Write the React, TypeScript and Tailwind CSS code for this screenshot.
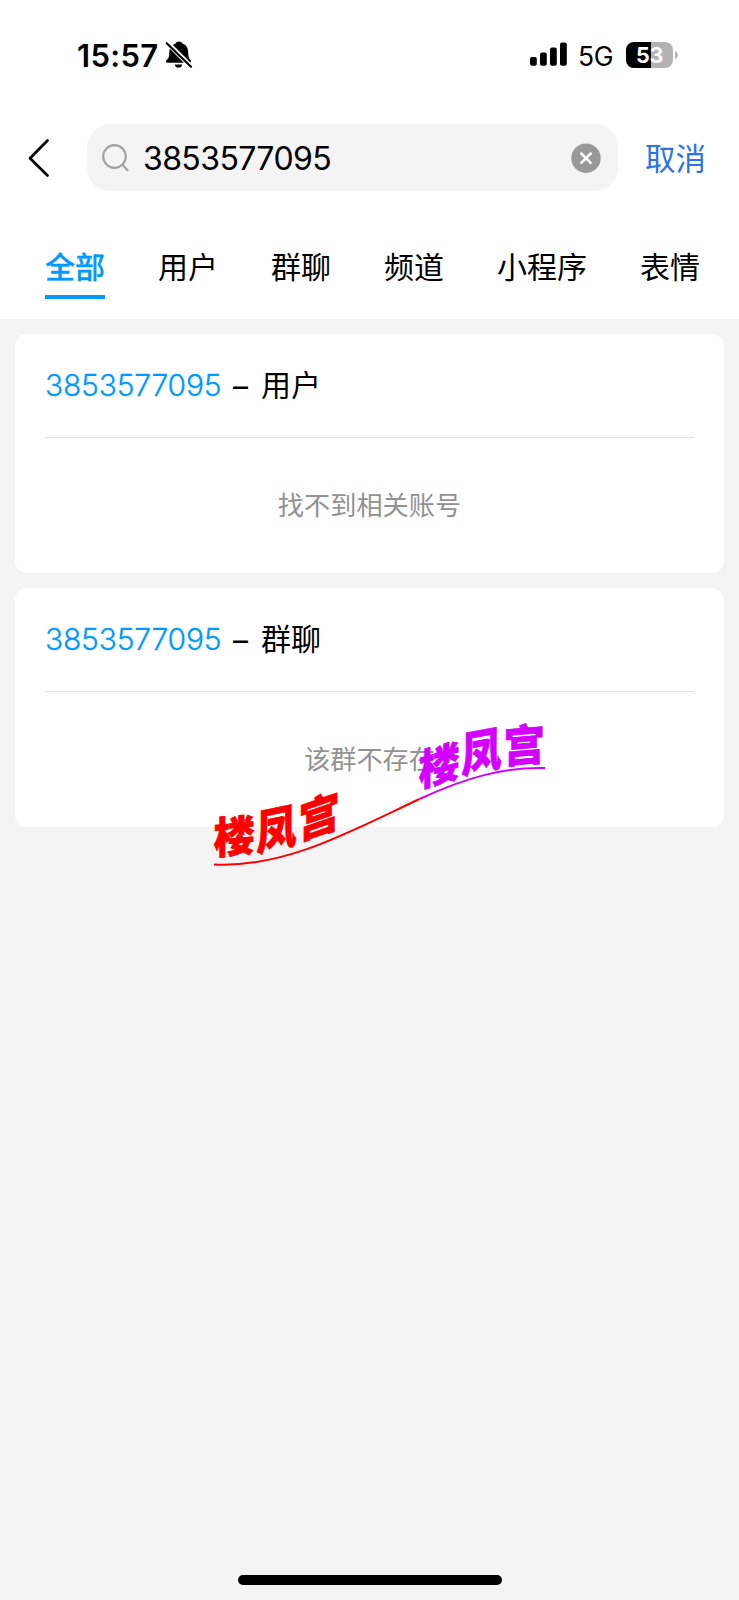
import type { ReactNode } from 'react';

const tabs = ['全部', '用户', '群聊', '频道', '小程序', '表情'];

function StatusBar() {
  return (
    <div className="flex h-[110px] items-center pl-[77px] pr-[60px]">
      <span className="w-[82px] whitespace-nowrap pt-[1px] text-[31px] leading-[40px] font-semibold tracking-[0.3px]">15:57</span>
      <svg className="ml-[6px]" width="28" height="28" viewBox="0 0 28 28">
        <path d="M14 .5C16 .5 17.1 1.6 17.6 2.8C21.8 4.1 23.1 7.5 23.2 11.7C23.3 16 24 17.5 25.6 19.2C26.4 20.2 26 21.8 24.5 21.8H2.5C.9 21.8 .6 20.2 1.5 19.2C3.9 17 4.2 15.4 4.3 11.7C4.4 7.3 6.5 4.1 10.4 2.8C10.9 1.6 12 .5 14 .5Z" />
        <path d="M9.7 23.4H17.3C16.8 25.5 15.5 26.6 13.5 26.6C11.5 26.6 10.2 25.5 9.7 23.4Z" />
        <path d="M2 1.5L26 25.5" stroke="white" strokeWidth="4.8" />
        <path d="M1.7 2.2L26 25.8" stroke="black" strokeWidth="2.2" strokeLinecap="round" />
      </svg>
      <svg className="ml-auto" width="38" height="26" viewBox="0 0 38 26">
        <rect x="0" y="15" width="6.8" height="8.8" rx="2" />
        <rect x="10" y="10.5" width="6.8" height="13.3" rx="2" />
        <rect x="20" y="5.5" width="6.8" height="18.3" rx="2" />
        <rect x="30" y="0.5" width="6.8" height="23.3" rx="2" />
      </svg>
      <span className="ml-[10px] w-[38px] whitespace-nowrap pt-[2px] text-[26.5px] leading-[40px] tracking-[-0.3px]">5G</span>
      <svg className="ml-[10px]" width="53" height="26" viewBox="0 0 53 26">
        <defs>
          <clipPath id="battery"><rect width="47" height="26" rx="8" /></clipPath>
        </defs>
        <g clipPath="url(#battery)">
          <rect width="47" height="26" fill="#b3b3b3" />
          <rect width="25" height="26" />
        </g>
        <path d="M49 9C52.7 10.2 52.7 15.8 49 17Z" fill="#b3b3b3" />
        <text x="23.7" y="20.8" textAnchor="middle" fontSize="21.5" fontWeight="700" fill="white">53</text>
      </svg>
    </div>
  );
}

function SearchHeader() {
  return (
    <div className="flex h-[95px] items-center">
      <svg className="ml-[28px]" width="22" height="40" viewBox="0 0 22 40" fill="none" stroke="black" strokeWidth="2.7" strokeLinecap="round" strokeLinejoin="round">
        <path d="M19.5 2.5L2 20.3L19.5 37.5" />
      </svg>
      <div className="ml-[37px] flex h-[67px] w-[531px] items-center rounded-[23px] bg-[#f4f4f4]">
        <svg className="ml-[15px]" width="28" height="30" viewBox="0 0 28 30" fill="none" stroke="#a3a3a3" strokeWidth="2.2" strokeLinecap="round">
          <circle cx="12.5" cy="13.5" r="11.3" />
          <path d="M20.5 21.8L25.5 27.3" />
        </svg>
        <span className="ml-[13px] pt-[3px] text-[32px] leading-[40px] tracking-[-0.6px]">3853577095</span>
        <svg className="mr-[17px] ml-auto" width="30" height="30" viewBox="0 0 30 30">
          <circle cx="15" cy="15.2" r="14.7" fill="#999999" />
          <path d="M10.3 10.5L19.7 19.9M19.7 10.5L10.3 19.9" stroke="white" strokeWidth="2.5" strokeLinecap="round" />
        </svg>
      </div>
      <span className="ml-[27px] pt-[3px] text-[30.5px] leading-[40px] text-[#2b73e6]">取消</span>
    </div>
  );
}

function Tabs() {
  return (
    <nav className="flex h-[114px] gap-[53px] pl-[45px] pt-[42px]">
      {tabs.map((tab, index) => (
        <div
          key={tab}
          className={index === 0
            ? 'h-[52px] shrink-0 border-b-4 border-[#0099ff] text-[30px] leading-[41px] font-medium text-[#0099ff] [-webkit-text-stroke:0.3px_#0099ff]'
            : 'h-[52px] shrink-0 text-[30px] leading-[41px]'}
        >
          {tab}
        </div>
      ))}
    </nav>
  );
}

function ResultCard({ type, children }: { type: string; children: ReactNode }) {
  return (
    <section className="h-[239px] rounded-[12px] bg-white px-[30px]">
      <div className="flex h-[104px] items-center border-b border-[#e2e2e2] pb-[1px] text-[30px] leading-[40px]">
        <span className="w-[177px] font-light tracking-[-0.2px] whitespace-nowrap text-[#0099ff] [-webkit-text-stroke:0.3px_#0099ff]">3853577095</span>
        <span className="ml-[11px] w-[18px] pt-[1px]">–</span>
        <span className="ml-[10px]">{type}</span>
      </div>
      <div className="flex h-[135px] items-center justify-center text-[26.2px] leading-[40px] text-[#929292]">
        {children}
      </div>
    </section>
  );
}

function Watermark() {
  return (
    <svg className="absolute left-[200px] top-[710px]" width="360" height="170" viewBox="0 0 360 170" fontWeight="900">
      <g fill="#ff0000" stroke="#ff0000" strokeWidth="0.7">
        <text transform="matrix(0.98 -0.08 0 1.02 13.5 144)" fontSize="42">楼</text>
        <text transform="matrix(0.95 -0.2 0 1.12 56.5 141)" fontSize="42">凤</text>
        <text transform="matrix(0.98 -0.34 0 1.06 98.5 130)" fontSize="42">宫</text>
        <path d="M14 154.5C86 158 151 121 219.5 89" fill="none" strokeWidth="2" />
      </g>
      <g fill="#d400ff" stroke="#d400ff" strokeWidth="0.7">
        <text transform="matrix(0.98 -0.26 0 1.02 218.5 77)" fontSize="42">楼</text>
        <text transform="matrix(0.95 -0.18 0 1.12 261.5 63)" fontSize="42">凤</text>
        <text transform="matrix(0.98 -0.08 0 1.04 303.5 53)" fontSize="42">宫</text>
        <path d="M219.5 89C267 67 305 57 345 58" fill="none" strokeWidth="2" />
      </g>
    </svg>
  );
}

export default function App() {
  return (
    <div className="relative flex h-[1600px] w-[739px] flex-col overflow-hidden bg-[#f4f4f4] font-['Inter','Noto_Sans_CJK_SC',sans-serif] text-black">
      <header className="h-[319px] shrink-0 bg-white">
        <StatusBar />
        <SearchHeader />
        <Tabs />
      </header>
      <main className="flex flex-col gap-[15px] px-[15px] pt-[15px]">
        <ResultCard type="用户">找不到相关账号</ResultCard>
        <ResultCard type="群聊">该群不存在</ResultCard>
      </main>
      <Watermark />
      <div className="mx-auto mt-auto mb-[15px] h-[10px] w-[264px] shrink-0 rounded-full bg-black" />
    </div>
  );
}
